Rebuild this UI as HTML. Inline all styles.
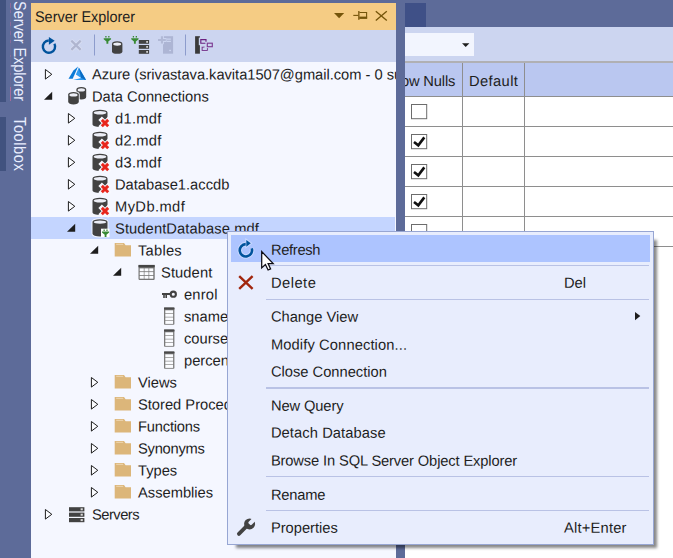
<!DOCTYPE html>
<html><head><meta charset="utf-8">
<style>
*{margin:0;padding:0;box-sizing:border-box}
html,body{width:673px;height:558px;overflow:hidden;background:#5d6b99}
body{position:relative;font-family:"Liberation Sans",sans-serif;font-size:14.7px;color:#1e1e1e}
.abs{position:absolute}
.t{position:absolute;white-space:pre;line-height:22px;height:22px;transform:rotate(0.05deg)}
.vt{position:absolute;white-space:pre;color:#e9eeff;font-size:14.6px;line-height:16px;height:16px;transform-origin:0 0;transform:rotate(90deg) scale(1,1.09)}
svg{position:absolute;left:0;top:0;overflow:visible}
.layer{position:absolute;left:0;top:0;width:673px;height:558px;overflow:hidden}
</style></head><body>
<!-- left auto-hide strip -->
<div class="abs" style="left:0;top:0;width:5.5px;height:102px;background:#41527f"></div>
<div class="abs" style="left:0;top:117px;width:5.5px;height:54px;background:#41527f"></div>
<div class="vt" style="left:28.2px;top:1.2px;letter-spacing:-0.09px">Server Explorer</div>
<div class="vt" style="left:28.2px;top:117px;letter-spacing:0.58px">Toolbox</div>

<div class="abs" style="left:9.7px;top:3px;width:1px;height:98px;background:rgba(190,110,160,0.1)"></div><div class="abs" style="left:9.7px;top:3px;width:1px;height:5px;background:rgba(205,110,160,0.35)"></div><div class="abs" style="left:9.7px;top:9.5px;width:1px;height:3.5px;background:rgba(205,110,160,0.3)"></div><div class="abs" style="left:9.7px;top:22px;width:1px;height:4px;background:rgba(205,110,160,0.35)"></div><div class="abs" style="left:9.7px;top:31px;width:1px;height:4px;background:rgba(205,110,160,0.3)"></div><div class="abs" style="left:9.7px;top:40px;width:1px;height:3px;background:rgba(205,110,160,0.3)"></div><div class="abs" style="left:9.7px;top:55px;width:1px;height:2px;background:rgba(205,110,160,0.25)"></div><div class="abs" style="left:9.7px;top:65px;width:1px;height:2px;background:rgba(205,110,160,0.25)"></div><div class="abs" style="left:9.7px;top:73px;width:1px;height:2px;background:rgba(205,110,160,0.25)"></div><div class="abs" style="left:9.7px;top:86.5px;width:1px;height:14.0px;background:rgba(205,110,160,0.6)"></div>
<!-- Server explorer panel -->
<div class="abs" style="left:31px;top:2.8px;width:365px;height:27.2px;background:#f5cc84"></div>
<div class="t" style="left:35px;top:6px;font-size:15.5px;text-rendering:geometricPrecision;transform-origin:0 16px;transform:translate(0,0.5px) scale(0.93,1)">Server Explorer</div>
<div class="abs" style="left:31px;top:30px;width:365px;height:31.6px;background:#ccd5f0"></div>
<div class="abs" style="left:31px;top:61.6px;width:365px;height:497px;background:#f5f7ff"></div>
<div class="abs" style="left:31px;top:217px;width:364px;height:21.7px;background:#c4d5ff"></div>
<div class="layer" style="width:396px">
<svg width="673" height="558" viewBox="0 0 673 558"><path d="M334,13 h10.2 l-5.1,5.2 Z" fill="#75550a"/><path d="M353.3,15.4 h5" stroke="#75550a" stroke-width="1.1" fill="none"/><rect x="358.2" y="11" width="1.3" height="8.8" fill="#75550a"/><path d="M359.4,12.5 h7.2 v5.6 h-7.2" stroke="#75550a" stroke-width="1.1" fill="none"/><rect x="359.4" y="16.6" width="7.7" height="2" fill="#75550a"/><path d="M375.8,11.2 L386.8,20.4 M386.8,11.2 L375.8,20.4" stroke="#75550a" stroke-width="1.35" fill="none"/><path d="M54.43,43.71 A6.15,6.15 0 1 1 48.79,40.45" fill="none" stroke="#00539c" stroke-width="2.4"/><path d="M48.90,36.95 L54.70,40.85 L48.90,44.75 Z" fill="#00539c"/><path d="M71,40.3 L81,50.2 M81,40.3 L71,50.2" stroke="#d9dff3" stroke-width="4" fill="none"/><path d="M71.3,40.6 L80.7,49.9 M80.7,40.6 L71.3,49.9" stroke="#b0b6d0" stroke-width="2.3" fill="none"/><rect x="94" y="34.5" width="1" height="21" fill="#8d9ccc"/><path d="M105.27,36.00 h1.27 v1.57 h-1.27 Z M108.21,36.00 h1.27 v1.57 h-1.27 Z" fill="#388a34"/><path d="M103.70,38.16 L111.05,38.16 L111.05,39.14 L108.31,41.49 L108.31,43.84 L106.44,43.84 L106.44,41.49 L103.70,39.14 Z" fill="#388a34"/><path d="M112,43.800000000000004 A5.2,2.6 0 0 1 122.4,43.800000000000004 L122.4,51.2 A5.2,2.6 0 0 1 112,51.2 Z" fill="#424242"/><ellipse cx="117.2" cy="44.1" rx="4.0" ry="1.7000000000000002" fill="#eceef6"/><path d="M132.77,36.00 h1.27 v1.57 h-1.27 Z M135.71,36.00 h1.27 v1.57 h-1.27 Z" fill="#388a34"/><path d="M131.20,38.16 L138.55,38.16 L138.55,39.14 L135.81,41.49 L135.81,43.84 L133.94,43.84 L133.94,41.49 L131.20,39.14 Z" fill="#388a34"/><rect x="138.8" y="40" width="10.3" height="3.8" fill="#424242"/><rect x="146.2" y="41" width="1.8" height="1.8" fill="#cfcfcf"/><rect x="138.8" y="45" width="10.3" height="3.8" fill="#424242"/><rect x="146.2" y="46" width="1.8" height="1.8" fill="#cfcfcf"/><rect x="138.8" y="50" width="10.3" height="3.8" fill="#424242"/><rect x="146.2" y="51" width="1.8" height="1.8" fill="#cfcfcf"/><rect x="163" y="36.2" width="10.1" height="17.5" fill="#adb5d4"/><path d="M157.2,40 h9.4 M161.95,35.4 v8.9" stroke="#ccd5f0" stroke-width="3.9" fill="none"/><path d="M158,40 h7.8 M161.95,36.2 v7.3" stroke="#b1b9d6" stroke-width="2.1" fill="none"/><rect x="166.8" y="38.5" width="4.1" height="1.2" fill="#ccd5f0"/><rect x="166.8" y="40.8" width="4.1" height="1.2" fill="#ccd5f0"/><rect x="169.2" y="49.8" width="1.8" height="1.3" fill="#ccd5f0"/><rect x="185" y="34.5" width="1" height="21" fill="#8d9ccc"/><rect x="195.1" y="36.2" width="4.8" height="17.5" fill="#3a3a3a"/><rect x="198.8" y="37.6" width="1.6" height="7.6" fill="#ccd5f0"/><g fill="none" stroke="#6a2180" stroke-width="1.15"><path d="M206.0,41.8 V39.6 H200.8 V43.2 H205.4"/><rect x="207.3" y="43.2" width="5" height="3.5" stroke="#7d3c92"/><path d="M204.4,47.0 H202.0 V50.5 H207.5 V48.2"/></g><g fill="none" stroke="#dde3f6" stroke-width="0.8" opacity="0.7"><path d="M203.8,46.3 H201.2 V51.2 H208.1 V48.6"/></g><path d="M45.4,69.5 L51.8,74.3 L45.4,79.1 Z" fill="#fbfcff" stroke="#1e1e1e" stroke-width="1.0" stroke-linejoin="miter"/><path d="M78.1,66.4 L73.4,70.60000000000001 L68.5,78.80000000000001 L72.7,78.80000000000001 Z" fill="#0a7ad6"/><path d="M78.8,67.5 L75.9,74.60000000000001 L81.1,78.0 L73.1,80.10000000000001 L86.1,80.10000000000001 Z" fill="#2f9bf0"/><path d="M78.8,67.5 L86.1,80.10000000000001 L81.1,78.0 Z" fill="#0a6cc4"/><path d="M52.2,91.7 L52.2,99.8 L44.0,99.8 Z" fill="#1e1e1e"/><path d="M76.4,89.6 A4.9,2.6 0 0 1 86.2,89.6 L86.2,96.80000000000001 A4.9,2.6 0 0 1 76.4,96.80000000000001 Z" fill="none" stroke="#f5f7ff" stroke-opacity="0.9" stroke-width="2"/><path d="M76.4,89.6 A4.9,2.6 0 0 1 86.2,89.6 L86.2,96.80000000000001 A4.9,2.6 0 0 1 76.4,96.80000000000001 Z" fill="#424242"/><ellipse cx="81.30000000000001" cy="89.89999999999999" rx="3.7" ry="1.7000000000000002" fill="#eceef6"/><path d="M68.2,94.6 A5.3,2.6 0 0 1 78.8,94.6 L78.8,101.80000000000001 A5.3,2.6 0 0 1 68.2,101.80000000000001 Z" fill="none" stroke="#f5f7ff" stroke-opacity="0.9" stroke-width="2"/><path d="M68.2,94.6 A5.3,2.6 0 0 1 78.8,94.6 L78.8,101.80000000000001 A5.3,2.6 0 0 1 68.2,101.80000000000001 Z" fill="#424242"/><ellipse cx="73.5" cy="94.89999999999999" rx="4.1" ry="1.7000000000000002" fill="#eceef6"/><path d="M68.39999999999999,113.5 L74.8,118.3 L68.39999999999999,123.1 Z" fill="#fbfcff" stroke="#1e1e1e" stroke-width="1.0" stroke-linejoin="miter"/><path d="M92.5,112.39999999999999 A7.5,2.6 0 0 1 107.5,112.39999999999999 L107.5,124.4 A7.5,2.6 0 0 1 92.5,124.4 Z" fill="none" stroke="#f5f7ff" stroke-opacity="0.9" stroke-width="2"/><path d="M92.5,112.39999999999999 A7.5,2.6 0 0 1 107.5,112.39999999999999 L107.5,124.4 A7.5,2.6 0 0 1 92.5,124.4 Z" fill="#424242"/><ellipse cx="100.0" cy="112.69999999999999" rx="6.3" ry="1.7000000000000002" fill="#eceef6"/><path d="M101.9,120.0 L108.10000000000001,126.2 M108.10000000000001,120.0 L101.9,126.2" stroke="#f8f9ff" stroke-width="5" stroke-linecap="square"/><path d="M101.8,119.89999999999999 L108.2,126.3 M108.2,119.89999999999999 L101.8,126.3" stroke="#e8261c" stroke-width="2.9" stroke-linecap="butt"/><path d="M68.39999999999999,135.5 L74.8,140.3 L68.39999999999999,145.10000000000002 Z" fill="#fbfcff" stroke="#1e1e1e" stroke-width="1.0" stroke-linejoin="miter"/><path d="M92.5,134.4 A7.5,2.6 0 0 1 107.5,134.4 L107.5,146.4 A7.5,2.6 0 0 1 92.5,146.4 Z" fill="none" stroke="#f5f7ff" stroke-opacity="0.9" stroke-width="2"/><path d="M92.5,134.4 A7.5,2.6 0 0 1 107.5,134.4 L107.5,146.4 A7.5,2.6 0 0 1 92.5,146.4 Z" fill="#424242"/><ellipse cx="100.0" cy="134.70000000000002" rx="6.3" ry="1.7000000000000002" fill="#eceef6"/><path d="M101.9,142.0 L108.10000000000001,148.20000000000002 M108.10000000000001,142.0 L101.9,148.20000000000002" stroke="#f8f9ff" stroke-width="5" stroke-linecap="square"/><path d="M101.8,141.9 L108.2,148.3 M108.2,141.9 L101.8,148.3" stroke="#e8261c" stroke-width="2.9" stroke-linecap="butt"/><path d="M68.39999999999999,157.5 L74.8,162.3 L68.39999999999999,167.10000000000002 Z" fill="#fbfcff" stroke="#1e1e1e" stroke-width="1.0" stroke-linejoin="miter"/><path d="M92.5,156.4 A7.5,2.6 0 0 1 107.5,156.4 L107.5,168.4 A7.5,2.6 0 0 1 92.5,168.4 Z" fill="none" stroke="#f5f7ff" stroke-opacity="0.9" stroke-width="2"/><path d="M92.5,156.4 A7.5,2.6 0 0 1 107.5,156.4 L107.5,168.4 A7.5,2.6 0 0 1 92.5,168.4 Z" fill="#424242"/><ellipse cx="100.0" cy="156.70000000000002" rx="6.3" ry="1.7000000000000002" fill="#eceef6"/><path d="M101.9,164.0 L108.10000000000001,170.20000000000002 M108.10000000000001,164.0 L101.9,170.20000000000002" stroke="#f8f9ff" stroke-width="5" stroke-linecap="square"/><path d="M101.8,163.9 L108.2,170.3 M108.2,163.9 L101.8,170.3" stroke="#e8261c" stroke-width="2.9" stroke-linecap="butt"/><path d="M68.39999999999999,179.5 L74.8,184.3 L68.39999999999999,189.10000000000002 Z" fill="#fbfcff" stroke="#1e1e1e" stroke-width="1.0" stroke-linejoin="miter"/><path d="M92.5,178.4 A7.5,2.6 0 0 1 107.5,178.4 L107.5,190.4 A7.5,2.6 0 0 1 92.5,190.4 Z" fill="none" stroke="#f5f7ff" stroke-opacity="0.9" stroke-width="2"/><path d="M92.5,178.4 A7.5,2.6 0 0 1 107.5,178.4 L107.5,190.4 A7.5,2.6 0 0 1 92.5,190.4 Z" fill="#424242"/><ellipse cx="100.0" cy="178.70000000000002" rx="6.3" ry="1.7000000000000002" fill="#eceef6"/><path d="M101.9,186.0 L108.10000000000001,192.20000000000002 M108.10000000000001,186.0 L101.9,192.20000000000002" stroke="#f8f9ff" stroke-width="5" stroke-linecap="square"/><path d="M101.8,185.9 L108.2,192.3 M108.2,185.9 L101.8,192.3" stroke="#e8261c" stroke-width="2.9" stroke-linecap="butt"/><path d="M68.39999999999999,201.5 L74.8,206.3 L68.39999999999999,211.10000000000002 Z" fill="#fbfcff" stroke="#1e1e1e" stroke-width="1.0" stroke-linejoin="miter"/><path d="M92.5,200.4 A7.5,2.6 0 0 1 107.5,200.4 L107.5,212.4 A7.5,2.6 0 0 1 92.5,212.4 Z" fill="none" stroke="#f5f7ff" stroke-opacity="0.9" stroke-width="2"/><path d="M92.5,200.4 A7.5,2.6 0 0 1 107.5,200.4 L107.5,212.4 A7.5,2.6 0 0 1 92.5,212.4 Z" fill="#424242"/><ellipse cx="100.0" cy="200.70000000000002" rx="6.3" ry="1.7000000000000002" fill="#eceef6"/><path d="M101.9,208.0 L108.10000000000001,214.20000000000002 M108.10000000000001,208.0 L101.9,214.20000000000002" stroke="#f8f9ff" stroke-width="5" stroke-linecap="square"/><path d="M101.8,207.9 L108.2,214.3 M108.2,207.9 L101.8,214.3" stroke="#e8261c" stroke-width="2.9" stroke-linecap="butt"/><path d="M75.2,223.70000000000002 L75.2,231.8 L67.0,231.8 Z" fill="#1e1e1e"/><path d="M92.5,221.79999999999998 A7.5,2.6 0 0 1 107.5,221.79999999999998 L107.5,233.79999999999998 A7.5,2.6 0 0 1 92.5,233.79999999999998 Z" fill="none" stroke="#f5f7ff" stroke-opacity="0.9" stroke-width="2"/><path d="M92.5,221.79999999999998 A7.5,2.6 0 0 1 107.5,221.79999999999998 L107.5,233.79999999999998 A7.5,2.6 0 0 1 92.5,233.79999999999998 Z" fill="#424242"/><ellipse cx="100.0" cy="222.1" rx="6.3" ry="1.7000000000000002" fill="#eceef6"/><rect x="101.0" y="228.7" width="8.5" height="8.5" fill="#ffffff"/><path d="M103.52,229.50 h1.23 v1.52 h-1.23 Z M106.37,229.50 h1.23 v1.52 h-1.23 Z" fill="#388a34"/><path d="M102.00,231.59 L109.12,231.59 L109.12,232.54 L106.47,234.82 L106.47,237.10 L104.66,237.10 L104.66,234.82 L102.00,232.54 Z" fill="#388a34"/><path d="M98.2,245.70000000000002 L98.2,253.8 L90.0,253.8 Z" fill="#1e1e1e"/><path d="M114.7,243 h9.3 l1.6,2.2 h5.4 v11.4 h-16.3 Z" fill="#dcb67a"/><path d="M116.2,244.3 h7" stroke="#efd9b4" stroke-width="1"/><path d="M121.2,267.7 L121.2,275.8 L113.0,275.8 Z" fill="#1e1e1e"/><rect x="138.5" y="264.9" width="16.2" height="15" rx="0.8" fill="#767676"/><rect x="138.5" y="264.9" width="16.2" height="2.4" fill="#454545"/><rect x="139.70" y="268.40" width="4.1" height="2.9" fill="#fbfcff"/><rect x="144.45" y="268.40" width="4.1" height="2.9" fill="#fbfcff"/><rect x="149.20" y="268.40" width="4.1" height="2.9" fill="#fbfcff"/><rect x="139.70" y="272.10" width="4.1" height="2.9" fill="#fbfcff"/><rect x="144.45" y="272.10" width="4.1" height="2.9" fill="#fbfcff"/><rect x="149.20" y="272.10" width="4.1" height="2.9" fill="#fbfcff"/><rect x="139.70" y="275.80" width="4.1" height="2.9" fill="#fbfcff"/><rect x="144.45" y="275.80" width="4.1" height="2.9" fill="#fbfcff"/><rect x="149.20" y="275.80" width="4.1" height="2.9" fill="#fbfcff"/><circle cx="173.3" cy="294.20000000000005" r="2.6" fill="none" stroke="#424242" stroke-width="2.1"/><path d="M162.0,293.0 h8 v2.1 h-1.8 v0 h-1.2 v3 h-1.6 v-3 h-0.6 v3 h-1.6 v-3 h-1.2 Z" fill="#424242"/><rect x="164.0" y="307.5" width="10.4" height="17.2" rx="0.8" fill="#7a7a7a"/><rect x="164.0" y="307.5" width="10.4" height="2.0" fill="#4a4a4a"/><rect x="165.3" y="310.30" width="7.8" height="2.95" fill="#fbfcff"/><rect x="165.3" y="313.85" width="7.8" height="2.95" fill="#fbfcff"/><rect x="165.3" y="317.40" width="7.8" height="2.95" fill="#fbfcff"/><rect x="165.3" y="320.95" width="7.8" height="2.95" fill="#fbfcff"/><rect x="164.0" y="329.5" width="10.4" height="17.2" rx="0.8" fill="#7a7a7a"/><rect x="164.0" y="329.5" width="10.4" height="2.0" fill="#4a4a4a"/><rect x="165.3" y="332.30" width="7.8" height="2.95" fill="#fbfcff"/><rect x="165.3" y="335.85" width="7.8" height="2.95" fill="#fbfcff"/><rect x="165.3" y="339.40" width="7.8" height="2.95" fill="#fbfcff"/><rect x="165.3" y="342.95" width="7.8" height="2.95" fill="#fbfcff"/><rect x="164.0" y="351.5" width="10.4" height="17.2" rx="0.8" fill="#7a7a7a"/><rect x="164.0" y="351.5" width="10.4" height="2.0" fill="#4a4a4a"/><rect x="165.3" y="354.30" width="7.8" height="2.95" fill="#fbfcff"/><rect x="165.3" y="357.85" width="7.8" height="2.95" fill="#fbfcff"/><rect x="165.3" y="361.40" width="7.8" height="2.95" fill="#fbfcff"/><rect x="165.3" y="364.95" width="7.8" height="2.95" fill="#fbfcff"/><path d="M91.39999999999999,377.5 L97.8,382.3 L91.39999999999999,387.1 Z" fill="#fbfcff" stroke="#1e1e1e" stroke-width="1.0" stroke-linejoin="miter"/><path d="M114.7,375 h9.3 l1.6,2.2 h5.4 v11.4 h-16.3 Z" fill="#dcb67a"/><path d="M116.2,376.3 h7" stroke="#efd9b4" stroke-width="1"/><path d="M91.39999999999999,399.5 L97.8,404.3 L91.39999999999999,409.1 Z" fill="#fbfcff" stroke="#1e1e1e" stroke-width="1.0" stroke-linejoin="miter"/><path d="M114.7,397 h9.3 l1.6,2.2 h5.4 v11.4 h-16.3 Z" fill="#dcb67a"/><path d="M116.2,398.3 h7" stroke="#efd9b4" stroke-width="1"/><path d="M91.39999999999999,421.5 L97.8,426.3 L91.39999999999999,431.1 Z" fill="#fbfcff" stroke="#1e1e1e" stroke-width="1.0" stroke-linejoin="miter"/><path d="M114.7,419 h9.3 l1.6,2.2 h5.4 v11.4 h-16.3 Z" fill="#dcb67a"/><path d="M116.2,420.3 h7" stroke="#efd9b4" stroke-width="1"/><path d="M91.39999999999999,443.5 L97.8,448.3 L91.39999999999999,453.1 Z" fill="#fbfcff" stroke="#1e1e1e" stroke-width="1.0" stroke-linejoin="miter"/><path d="M114.7,441 h9.3 l1.6,2.2 h5.4 v11.4 h-16.3 Z" fill="#dcb67a"/><path d="M116.2,442.3 h7" stroke="#efd9b4" stroke-width="1"/><path d="M91.39999999999999,465.5 L97.8,470.3 L91.39999999999999,475.1 Z" fill="#fbfcff" stroke="#1e1e1e" stroke-width="1.0" stroke-linejoin="miter"/><path d="M114.7,463 h9.3 l1.6,2.2 h5.4 v11.4 h-16.3 Z" fill="#dcb67a"/><path d="M116.2,464.3 h7" stroke="#efd9b4" stroke-width="1"/><path d="M91.39999999999999,487.5 L97.8,492.3 L91.39999999999999,497.1 Z" fill="#fbfcff" stroke="#1e1e1e" stroke-width="1.0" stroke-linejoin="miter"/><path d="M114.7,485 h9.3 l1.6,2.2 h5.4 v11.4 h-16.3 Z" fill="#dcb67a"/><path d="M116.2,486.3 h7" stroke="#efd9b4" stroke-width="1"/><path d="M45.4,509.49999999999994 L51.8,514.3 L45.4,519.0999999999999 Z" fill="#fbfcff" stroke="#1e1e1e" stroke-width="1.0" stroke-linejoin="miter"/><rect x="69.0" y="507.20" width="15.4" height="4.2" fill="#424242"/><rect x="80.6" y="508.30" width="2.2" height="2" fill="#d8d8d8"/><rect x="69.0" y="512.60" width="15.4" height="4.2" fill="#424242"/><rect x="80.6" y="513.70" width="2.2" height="2" fill="#d8d8d8"/><rect x="69.0" y="518.00" width="15.4" height="4.2" fill="#424242"/><rect x="80.6" y="519.10" width="2.2" height="2" fill="#d8d8d8"/></svg>
<div class="t" style="left:92px;top:63px;transform:translate(0.00px,0.50px) rotate(0.05deg);letter-spacing:-0.025px">Azure (srivastava.kavita1507@gmail.com - 0 subscriptions)</div><div class="t" style="left:92px;top:85px;transform:translate(0.00px,0.50px) rotate(0.05deg);letter-spacing:0px">Data Connections</div><div class="t" style="left:115px;top:107px;transform:translate(0.00px,0.50px) rotate(0.05deg);letter-spacing:0.3px">d1.mdf</div><div class="t" style="left:115px;top:129px;transform:translate(0.00px,0.50px) rotate(0.05deg);letter-spacing:0.3px">d2.mdf</div><div class="t" style="left:115px;top:151px;transform:translate(0.00px,0.50px) rotate(0.05deg);letter-spacing:0.3px">d3.mdf</div><div class="t" style="left:115px;top:173px;transform:translate(0.00px,0.50px) rotate(0.05deg);letter-spacing:0px">Database1.accdb</div><div class="t" style="left:115px;top:195px;transform:translate(0.00px,0.50px) rotate(0.05deg);letter-spacing:0.4px">MyDb.mdf</div><div class="t" style="left:115px;top:217px;transform:translate(0.00px,0.50px) rotate(0.05deg);letter-spacing:0.1px">StudentDatabase.mdf</div><div class="t" style="left:138px;top:239px;transform:translate(0.00px,0.50px) rotate(0.05deg);letter-spacing:0.25px">Tables</div><div class="t" style="left:161px;top:261px;transform:translate(0.00px,0.50px) rotate(0.05deg);letter-spacing:0.1px">Student</div><div class="t" style="left:184px;top:283px;transform:translate(0.00px,0.50px) rotate(0.05deg);letter-spacing:0.2px">enrol</div><div class="t" style="left:184px;top:305px;transform:translate(0.00px,0.50px) rotate(0.05deg);letter-spacing:0px">sname</div><div class="t" style="left:184px;top:327px;transform:translate(0.00px,0.50px) rotate(0.05deg);letter-spacing:0px">course</div><div class="t" style="left:184px;top:349px;transform:translate(0.00px,0.50px) rotate(0.05deg);letter-spacing:0px">percentage</div><div class="t" style="left:138px;top:371px;transform:translate(0.00px,0.50px) rotate(0.05deg);letter-spacing:0px">Views</div><div class="t" style="left:138px;top:393px;transform:translate(0.00px,0.50px) rotate(0.05deg);letter-spacing:0px">Stored Procedures</div><div class="t" style="left:138px;top:415px;transform:translate(0.00px,0.50px) rotate(0.05deg);letter-spacing:-0.19px">Functions</div><div class="t" style="left:138px;top:437px;transform:translate(0.00px,0.50px) rotate(0.05deg);letter-spacing:-0.25px">Synonyms</div><div class="t" style="left:138px;top:459px;transform:translate(0.00px,0.50px) rotate(0.05deg);letter-spacing:0px">Types</div><div class="t" style="left:138px;top:481px;transform:translate(0.00px,0.50px) rotate(0.05deg);letter-spacing:0px">Assemblies</div><div class="t" style="left:92px;top:503px;transform:translate(0.00px,0.50px) rotate(0.05deg);letter-spacing:-0.5px">Servers</div>
</div>

<!-- right area -->
<div class="abs" style="left:405px;top:2.8px;width:20.8px;height:24px;background:#3f5087"></div>
<div class="abs" style="left:405px;top:26.8px;width:268px;height:34.4px;background:#ccd5f0"></div>
<div class="abs" style="left:405px;top:32.5px;width:69.4px;height:23.7px;background:#f2f5fe"></div>
<div class="abs" style="left:405px;top:61px;width:268px;height:1.7px;background:#b0b0b3"></div><div class="abs" style="left:405px;top:62.5px;width:268px;height:34px;background:#bac7f0"></div><div class="abs" style="left:405px;top:96px;width:268px;height:462px;background:#ffffff"></div><div class="abs" style="left:405px;top:95.65px;width:268px;height:1.3px;background:#8e8e8e"></div><div class="abs" style="left:405px;top:125.65px;width:268px;height:1.3px;background:#8e8e8e"></div><div class="abs" style="left:405px;top:155.65px;width:268px;height:1.3px;background:#8e8e8e"></div><div class="abs" style="left:405px;top:185.65px;width:268px;height:1.3px;background:#8e8e8e"></div><div class="abs" style="left:405px;top:215.65px;width:268px;height:1.3px;background:#8e8e8e"></div><div class="abs" style="left:405px;top:245.65px;width:268px;height:1.3px;background:#8e8e8e"></div><div class="abs" style="left:461.9px;top:62.5px;width:1.2px;height:184px;background:#8e8e8e"></div><div class="abs" style="left:523.9px;top:62.5px;width:1.2px;height:184px;background:#8e8e8e"></div>
<div class="abs" style="left:405px;top:62px;width:268px;height:34px;overflow:hidden"><div class="t" style="left:-19.6px;top:8px;letter-spacing:-0.14px">Allow Nulls</div>
<div class="t" style="left:64.4px;top:8px;letter-spacing:0.4px">Default</div></div>
<div class="abs" style="left:396px;top:0;width:9px;height:558px;background:#5d6b99"></div>
<svg width="673" height="558" viewBox="0 0 673 558"><path d="M462,43.2 h7.4 l-3.7,3.9 Z" fill="#1e1e1e"/><rect x="411.5" y="104.5" width="15.2" height="14.2" fill="#ffffff" stroke="#6c6c6c" stroke-width="1"/><rect x="411.5" y="134.5" width="15.2" height="14.2" fill="#ffffff" stroke="#6c6c6c" stroke-width="1"/><path d="M414.0,141.9 L418.3,145.3 L424.3,137.4" fill="none" stroke="#111" stroke-width="2.6"/><rect x="411.5" y="164.5" width="15.2" height="14.2" fill="#ffffff" stroke="#6c6c6c" stroke-width="1"/><path d="M414.0,171.9 L418.3,175.3 L424.3,167.4" fill="none" stroke="#111" stroke-width="2.6"/><rect x="411.5" y="194.5" width="15.2" height="14.2" fill="#ffffff" stroke="#6c6c6c" stroke-width="1"/><path d="M414.0,201.9 L418.3,205.3 L424.3,197.4" fill="none" stroke="#111" stroke-width="2.6"/><rect x="411.5" y="224.5" width="15.2" height="14.2" fill="#ffffff" stroke="#6c6c6c" stroke-width="1"/></svg>

<!-- context menu -->
<div class="abs" style="left:236px;top:240px;width:421.0px;height:307.9px;background:rgba(0,0,0,0.47);filter:blur(1.6px)"></div>
<div class="abs" style="left:227.2px;top:231.3px;width:427.09999999999997px;height:313.3px;background:#e8edfd;border:1.3px solid #97a6d3"></div>
<div class="abs" style="left:231px;top:235px;width:419px;height:27px;background:#adc4ff"></div>
<div class="abs" style="left:266px;top:264.75px;width:383px;height:1.3px;background:#b9c2e5"></div><div class="abs" style="left:266px;top:298.75px;width:383px;height:1.3px;background:#b9c2e5"></div><div class="abs" style="left:266px;top:387.00px;width:383px;height:2.0px;background:#b9c2e5"></div><div class="abs" style="left:266px;top:475.75px;width:383px;height:1.3px;background:#b9c2e5"></div><div class="abs" style="left:266px;top:509.85px;width:383px;height:1.3px;background:#b9c2e5"></div>
<svg width="673" height="558" viewBox="0 0 673 558"><path d="M251.75,248.40 A6.15,6.15 0 1 1 245.69,244.15" fill="none" stroke="#c9d8ff" stroke-width="4.6" /><path d="M246.30,239.90 L250.80,243.30 L246.30,246.70 Z" fill="#c9d8ff" stroke="#c9d8ff" stroke-width="2"/><path d="M251.75,248.40 A6.15,6.15 0 1 1 245.69,244.15" fill="none" stroke="#00539c" stroke-width="2.6"/><path d="M246.30,239.90 L250.80,243.30 L246.30,246.70 Z" fill="#00539c"/><path d="M239.2,276.2 L252.6,288.8 M252.6,276.2 L239.2,288.8" stroke="#a1260d" stroke-width="2.4" fill="none"/><g transform="translate(237,518.5)"><path d="M1.9,15.4 L10.6,6.7" stroke="#424242" stroke-width="3.8" stroke-linecap="round" fill="none"/><circle cx="12.6" cy="5.4" r="5.5" fill="#424242"/><g transform="rotate(-45 12.6 5.4)"><rect x="12.3" y="3.3" width="9" height="4.2" rx="1.2" fill="#e8edfd"/></g></g><path d="M635,312 L640.3,316.1 L635,320.2 Z" fill="#1e1e1e"/></svg>
<div class="t m" style="left:270px;top:238px;transform:translate(0.90px,0.65px) rotate(0.05deg);letter-spacing:-0.3px">Refresh</div><div class="t m" style="left:270px;top:271px;transform:translate(0.90px,0.65px) rotate(0.05deg);letter-spacing:0.5px">Delete</div><div class="t m" style="left:564px;top:271px;transform:translate(0.00px,0.65px) rotate(0.05deg);letter-spacing:0px">Del</div><div class="t m" style="left:270px;top:305px;transform:translate(0.90px,0.65px) rotate(0.05deg);letter-spacing:0px">Change View</div><div class="t m" style="left:270px;top:333px;transform:translate(0.90px,0.65px) rotate(0.05deg);letter-spacing:0.12px">Modify Connection...</div><div class="t m" style="left:270px;top:360px;transform:translate(0.90px,0.65px) rotate(0.05deg);letter-spacing:0px">Close Connection</div><div class="t m" style="left:270px;top:394px;transform:translate(0.90px,0.65px) rotate(0.05deg);letter-spacing:-0.1px">New Query</div><div class="t m" style="left:270px;top:421px;transform:translate(0.90px,0.65px) rotate(0.05deg);letter-spacing:0.09px">Detach Database</div><div class="t m" style="left:270px;top:449px;transform:translate(0.90px,0.65px) rotate(0.05deg);letter-spacing:-0.13px">Browse In SQL Server Object Explorer</div><div class="t m" style="left:270px;top:483px;transform:translate(0.90px,0.65px) rotate(0.05deg);letter-spacing:-0.18px">Rename</div><div class="t m" style="left:270px;top:516px;transform:translate(0.90px,0.65px) rotate(0.05deg);letter-spacing:0px">Properties</div><div class="t m" style="left:564px;top:516px;transform:translate(0.00px,0.65px) rotate(0.05deg);letter-spacing:0.2px">Alt+Enter</div>
<svg width="673" height="558" viewBox="0 0 673 558"><g transform="translate(261.7,251.6)"><path d="M0,0 L0,16.3 L3.7,12.9 L6.4,18.4 L8.9,17.3 L6.4,11.9 L11.5,11.9 Z" fill="#ffffff" stroke="#0c0c14" stroke-width="1.25" stroke-linejoin="miter"/></g></svg>
</body></html>
